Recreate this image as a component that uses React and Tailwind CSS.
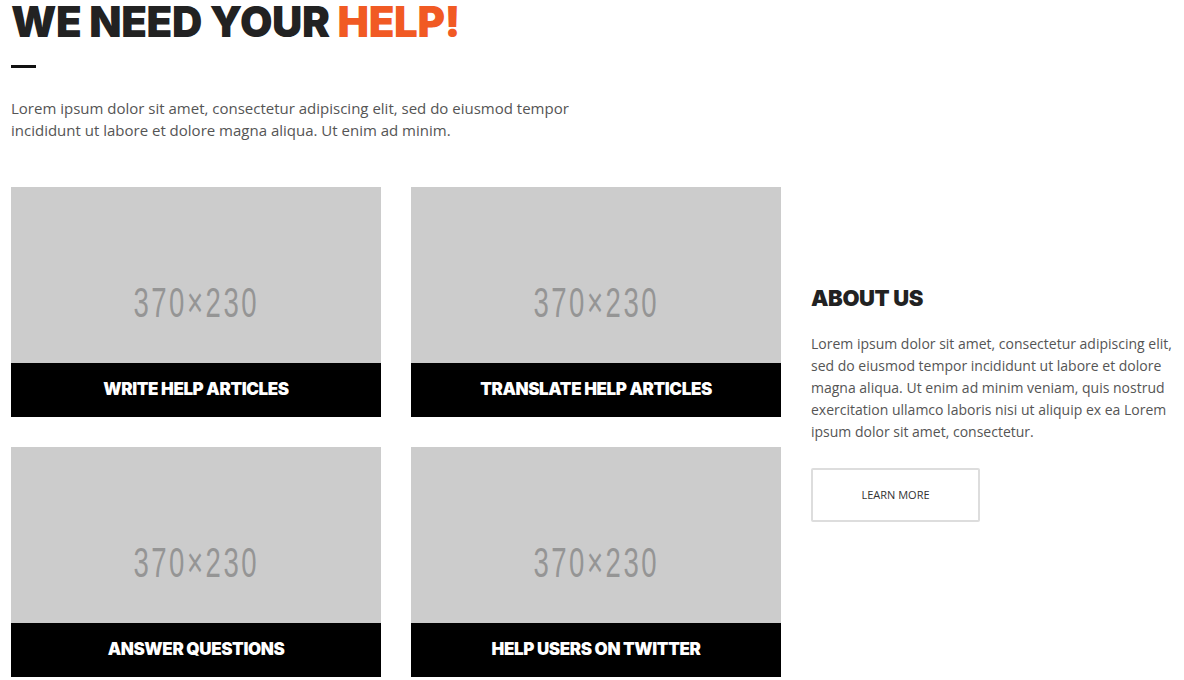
const cards = [
  "Write help articles",
  "Translate help articles",
  "Answer questions",
  "Help users on twitter",
];

const Card = ({ title }) => (
  <div className="relative h-[230px] w-[370px] bg-[#cccccc]">
    <div className="flex h-full items-center justify-center">
      <span className="inline-block scale-x-[0.64] font-['Liberation_Sans',sans-serif] text-[43px] leading-none tracking-[4px] text-[#959595]">
        370×230
      </span>
    </div>
    <div className="absolute inset-x-0 bottom-0 flex h-[54px] items-center justify-center bg-black">
      <span className="font-['Inter',sans-serif] text-[17px] font-black uppercase tracking-[-0.4px] text-white">
        {title}
      </span>
    </div>
  </div>
);

export default function App() {
  return (
    <div className="min-h-screen bg-white px-[11px] font-['Open_Sans',sans-serif]">
      <h1 className="font-['Inter',sans-serif] text-[42px] font-black uppercase leading-[44px] tracking-[-0.4px] text-[#222222]">
        We need your <span className="text-[#f15a24]">help!</span>
      </h1>
      <div className="mt-[21px] h-[3px] w-[25px] bg-[#111111]" />
      <p className="mt-[29px] w-[580px] text-[15px] leading-[22px] text-[#555555]">
        Lorem ipsum dolor sit amet, consectetur adipiscing elit, sed do eiusmod
        tempor incididunt ut labore et dolore magna aliqua. Ut enim ad minim.
      </p>

      <div className="mt-[46px] flex gap-[30px]">
        <div className="grid grid-cols-[370px_370px] gap-[30px]">
          {cards.map((c) => (
            <Card key={c} title={c} />
          ))}
        </div>

        <div className="w-[362px] pt-[98px]">
          <h2 className="font-['Inter',sans-serif] text-[22px] font-black uppercase leading-[26px] tracking-[-0.4px] text-[#222222]">
            About us
          </h2>
          <p className="mt-[22px] text-[14px] leading-[22px] text-[#555555]">
            Lorem ipsum dolor sit amet, consectetur adipiscing elit, sed do
            eiusmod tempor incididunt ut labore et dolore magna aliqua. Ut enim
            ad minim veniam, quis nostrud exercitation ullamco laboris nisi ut
            aliquip ex ea Lorem ipsum dolor sit amet, consectetur.
          </p>
          <button className="mt-[25px] flex h-[54px] w-[169px] items-center justify-center rounded-[2px] border-2 border-[#dddddd] bg-white text-[11px] uppercase text-[#333333]">
            Learn more
          </button>
        </div>
      </div>
    </div>
  );
}
